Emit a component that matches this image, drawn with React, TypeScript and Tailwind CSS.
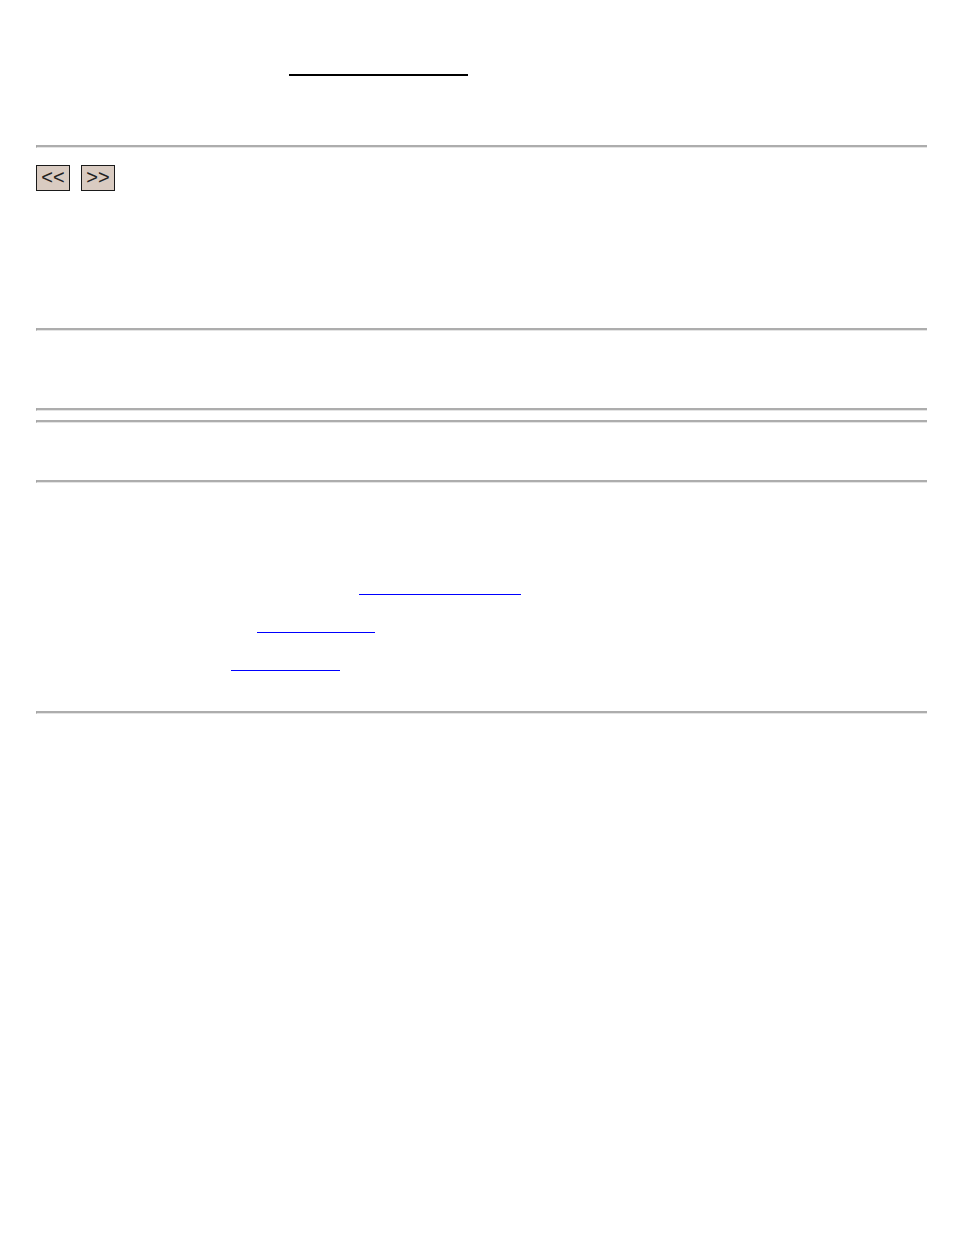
import React from "react";

function Rule({ mt }: { mt: string }) {
  return (
    <div
      className={`${mt} ml-[36px] w-[891px] h-[3px] border-t-2 border-t-[#adadad] border-b border-b-[#e4e4e4] border-l border-l-[#a0a0a0]`}
    />
  );
}

function NavButton({ label }: { label: string }) {
  return (
    <button
      type="button"
      className="w-[34px] h-[26px] bg-[#d9cbc1] border border-[#1a1a1a] flex items-center justify-center text-[20px] leading-none text-[#222] pb-[2px]"
      style={{ fontFamily: '"Liberation Sans", Arial, sans-serif' }}
    >
      {label}
    </button>
  );
}

export default function App() {
  return (
    <div
      className="w-[954px] min-h-[1235px] bg-white flex flex-col items-start"
      style={{ fontFamily: '"Liberation Serif", "Times New Roman", serif' }}
    >
      <div className="mt-[74px] ml-[289px] w-[179px] h-[2px] bg-black" />
      <Rule mt="mt-[69px]" />
      <div className="mt-[17px] ml-[36px] flex gap-[11px]">
        <NavButton label="<<" />
        <NavButton label=">>" />
      </div>
      <Rule mt="mt-[137px]" />
      <Rule mt="mt-[77px]" />
      <Rule mt="mt-[9px]" />
      <Rule mt="mt-[57px]" />
      <div className="mt-[111px] ml-[359px] w-[162px] h-px bg-[#0000ff]" />
      <div className="mt-[37px] ml-[257px] w-[118px] h-px bg-[#0000ff]" />
      <div className="mt-[37px] ml-[231px] w-[109px] h-px bg-[#0000ff]" />
      <Rule mt="mt-[40px]" />
    </div>
  );
}
